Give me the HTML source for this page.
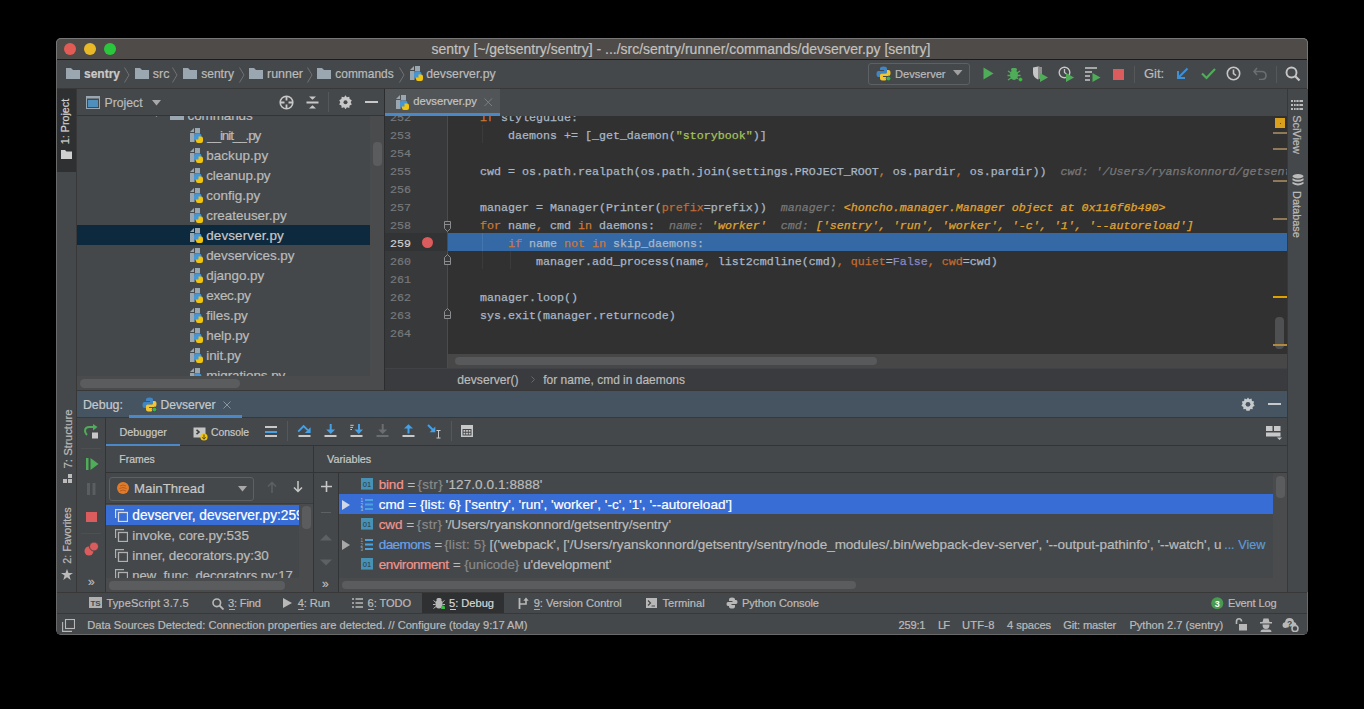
<!DOCTYPE html>
<html><head><meta charset="utf-8"><title>PyCharm</title>
<style>
html,body{margin:0;padding:0;background:#000;width:1364px;height:709px;overflow:hidden;}
body{position:relative;font-family:"Liberation Sans",sans-serif;}
.r{position:absolute;box-sizing:border-box;}
.t{position:absolute;white-space:pre;-webkit-text-stroke:0.2px currentColor;}
</style></head><body>
<div class="r" style="left:56px;top:38px;width:1252px;height:597px;background:#45484a;border-radius:5px;border:1px solid #6a6a6a;"></div>
<div class="r" style="left:56px;top:38px;width:1252px;height:22px;background:#4e4b49;border-radius:5px 5px 0 0;border:1px solid #777;border-bottom:none;"></div>
<div class="r" style="left:57px;top:59px;width:1250px;height:1px;background:#1c1c1c;"></div>
<div class="r" style="left:64px;top:43px;width:12px;height:12px;background:#e25c55;border-radius:50%;"></div>
<div class="r" style="left:84px;top:43px;width:12px;height:12px;background:#e9b827;border-radius:50%;"></div>
<div class="r" style="left:104px;top:43px;width:12px;height:12px;background:#2ac73c;border-radius:50%;"></div>
<div class="t" style="left:431.50px;top:39px;font-size:13.981px;line-height:20px;color:#c3c1bf;font-family:'Liberation Sans',sans-serif;">sentry [~/getsentry/sentry] - .../src/sentry/runner/commands/devserver.py [sentry]</div>
<div class="r" style="left:57px;top:60px;width:1250px;height:28px;background:#45484a;"></div>
<div class="r" style="left:57px;top:88px;width:1250px;height:1px;background:#383838;"></div>
<svg class="r" style="left:66px;top:68px;" width="14" height="11" viewBox="0 0 14 11"><path d="M0 0H5L7 2H14V11H0Z" fill="#9aa7b0"/></svg>
<div class="t" style="left:84.00px;top:66px;font-size:11.999px;line-height:17px;color:#c9c9c9;font-family:'Liberation Sans',sans-serif;font-weight:bold;">sentry</div>
<svg class="r" style="left:124px;top:67px;" width="6" height="16" viewBox="0 0 6 16"><path d="M0.5 0.5L5 8L0.5 15.5" stroke="#6f7173" stroke-width="1" fill="none"/></svg>
<svg class="r" style="left:135px;top:68px;" width="14" height="11" viewBox="0 0 14 11"><path d="M0 0H5L7 2H14V11H0Z" fill="#9aa7b0"/></svg>
<div class="t" style="left:152.80px;top:66px;font-size:12.470px;line-height:17px;color:#bbbbbb;font-family:'Liberation Sans',sans-serif;">src</div>
<svg class="r" style="left:172px;top:67px;" width="6" height="16" viewBox="0 0 6 16"><path d="M0.5 0.5L5 8L0.5 15.5" stroke="#6f7173" stroke-width="1" fill="none"/></svg>
<svg class="r" style="left:183px;top:68px;" width="14" height="11" viewBox="0 0 14 11"><path d="M0 0H5L7 2H14V11H0Z" fill="#9aa7b0"/></svg>
<div class="t" style="left:201.20px;top:66px;font-size:12.051px;line-height:17px;color:#bbbbbb;font-family:'Liberation Sans',sans-serif;">sentry</div>
<svg class="r" style="left:239px;top:67px;" width="6" height="16" viewBox="0 0 6 16"><path d="M0.5 0.5L5 8L0.5 15.5" stroke="#6f7173" stroke-width="1" fill="none"/></svg>
<svg class="r" style="left:249px;top:68px;" width="14" height="11" viewBox="0 0 14 11"><path d="M0 0H5L7 2H14V11H0Z" fill="#9aa7b0"/></svg>
<div class="t" style="left:267.00px;top:66px;font-size:12.454px;line-height:17px;color:#bbbbbb;font-family:'Liberation Sans',sans-serif;">runner</div>
<svg class="r" style="left:307px;top:67px;" width="6" height="16" viewBox="0 0 6 16"><path d="M0.5 0.5L5 8L0.5 15.5" stroke="#6f7173" stroke-width="1" fill="none"/></svg>
<svg class="r" style="left:317px;top:68px;" width="14" height="11" viewBox="0 0 14 11"><path d="M0 0H5L7 2H14V11H0Z" fill="#9aa7b0"/></svg>
<div class="t" style="left:335.30px;top:66px;font-size:11.941px;line-height:17px;color:#bbbbbb;font-family:'Liberation Sans',sans-serif;">commands</div>
<svg class="r" style="left:399px;top:67px;" width="6" height="16" viewBox="0 0 6 16"><path d="M0.5 0.5L5 8L0.5 15.5" stroke="#6f7173" stroke-width="1" fill="none"/></svg>
<svg class="r" style="left:410px;top:66px;" width="14" height="15" viewBox="0 0 14 15"><path d="M0 4L4 0V4Z" fill="#9aa7b0"/><path d="M5 0H10V5.5H5Z" fill="#9aa7b0"/><path d="M0 5H4.5V14H0Z" fill="#9aa7b0"/><rect x="4" y="5.8" width="7.5" height="7" rx="2.3" fill="#4596d6"/><path d="M8.5 8.5H11Q13 8.5 13 10.5V13Q13 15 11 15H8Q6 15 6 13V11.5H8.5Z" fill="#f1c40f"/></svg>
<div class="t" style="left:426.20px;top:66px;font-size:12.264px;line-height:17px;color:#bbbbbb;font-family:'Liberation Sans',sans-serif;">devserver.py</div>
<div class="r" style="left:868px;top:63px;width:102px;height:22px;border:1px solid #5e6164;border-radius:3px;background:#45484a;"></div>
<svg class="r" style="left:876px;top:66px;" width="15" height="15" viewBox="0 0 15 15"><path d="M7.5 0.5Q4 0.5 4 2.5V4H8V5H2.5Q0.5 5 0.5 8Q0.5 11 2.5 11H4V9Q4 7.5 5.5 7.5H9.5Q11 7.5 11 6V2.5Q11 0.5 7.5 0.5Z" fill="#3f86c6"/><path d="M7.5 14.5Q11 14.5 11 12.5V11H7V10H12.5Q14.5 10 14.5 7Q14.5 4 12.5 4H11V6Q11 7.5 9.5 7.5H5.5Q4 7.5 4 9V12.5Q4 14.5 7.5 14.5Z" fill="#f2c631"/><circle cx="12.5" cy="12.5" r="2.3" fill="#38b44a" stroke="#45484a" stroke-width="0.8"/></svg>
<div class="t" style="left:895.00px;top:66px;font-size:11.105px;line-height:16px;color:#bbbbbb;font-family:'Liberation Sans',sans-serif;">Devserver</div>
<svg class="r" style="left:953px;top:70px;" width="10" height="6" viewBox="0 0 10 6"><path d="M0 0H9.5L4.75 5.5Z" fill="#a0a0a0"/></svg>
<svg class="r" style="left:983px;top:67px;" width="11" height="13" viewBox="0 0 11 13"><path d="M0.5 0.5L10.5 6.5L0.5 12.5Z" fill="#4fad59"/></svg>
<svg class="r" style="left:1007px;top:66px;" width="16" height="16" viewBox="0 0 16 16"><g fill="#4fad59"><ellipse cx="7" cy="9" rx="4" ry="5"/><rect x="4" y="2" width="6" height="3" rx="1.5"/><path d="M1 5L4 7M13 5L10 7M0.5 9.5H3M13.5 9.5H11M1 14L4 12M13 14L10 12" stroke="#4fad59" stroke-width="1.3"/></g><circle cx="13.5" cy="13.5" r="2.2" fill="#38c040" stroke="#45484a" stroke-width="0.8"/></svg>
<svg class="r" style="left:1032px;top:66px;" width="17" height="16" viewBox="0 0 17 16"><path d="M1 1.5L6 0.5L10 1.5V7Q10 11 6 13.5Q1 11 1 7Z" fill="#c6c6c6"/><path d="M6 0.5L10 1.5V7Q10 11 6 13.5Z" fill="#8d8d8d"/><path d="M8 7L16 11.5L8 16Z" fill="#4fad59"/></svg>
<svg class="r" style="left:1058px;top:66px;" width="17" height="16" viewBox="0 0 17 16"><circle cx="6.5" cy="6.5" r="5.3" fill="none" stroke="#c6c6c6" stroke-width="1.4"/><path d="M6.5 3V6.5L8.5 8" stroke="#c6c6c6" stroke-width="1.3" fill="none"/><path d="M8 7L16 11.5L8 16Z" fill="#4fad59"/></svg>
<svg class="r" style="left:1085px;top:66px;" width="16" height="16" viewBox="0 0 16 16"><path d="M0 2H12M0 6H7M0 10H5M0 14H5" stroke="#c6c6c6" stroke-width="1.5"/><path d="M7.5 7L15.5 11.5L7.5 16Z" fill="#4fad59"/></svg>
<div class="r" style="left:1113px;top:69px;width:10.5px;height:10.5px;background:#db5c5c;"></div>
<div class="r" style="left:1134px;top:66px;width:1px;height:17px;background:#555759;"></div>
<div class="t" style="left:1144.00px;top:65px;font-size:13.003px;line-height:18px;color:#bbbbbb;font-family:'Liberation Sans',sans-serif;">Git:</div>
<svg class="r" style="left:1176px;top:67px;" width="13" height="13" viewBox="0 0 13 13"><path d="M11.5 1.5L2.5 10.5M2 4V11H9" stroke="#3d8fd6" stroke-width="2" fill="none"/></svg>
<svg class="r" style="left:1201px;top:67px;" width="15" height="13" viewBox="0 0 15 13"><path d="M1 6.5L5.5 11L14 2" stroke="#4fad59" stroke-width="2.2" fill="none"/></svg>
<svg class="r" style="left:1226px;top:66px;" width="15" height="15" viewBox="0 0 15 15"><circle cx="7.5" cy="7.5" r="6.2" fill="none" stroke="#c6c6c6" stroke-width="1.6"/><path d="M7.5 3.5V7.5L10 9.5" stroke="#c6c6c6" stroke-width="1.6" fill="none"/></svg>
<svg class="r" style="left:1253px;top:67px;" width="14" height="13" viewBox="0 0 14 13"><path d="M4 1L1 4.5L4 8M1.5 4.5H8.5Q13 4.5 13 8.5Q13 12.5 8.5 12.5H6" stroke="#6b6d6f" stroke-width="1.6" fill="none"/></svg>
<div class="r" style="left:1276px;top:66px;width:1px;height:17px;background:#555759;"></div>
<svg class="r" style="left:1285px;top:66px;" width="16" height="16" viewBox="0 0 16 16"><circle cx="6.5" cy="6.5" r="5" fill="none" stroke="#c6c6c6" stroke-width="1.9"/><path d="M10 10L14.5 14.5" stroke="#c6c6c6" stroke-width="2.3"/></svg>
<div class="r" style="left:57px;top:89px;width:20px;height:503px;background:#45484a;"></div>
<div class="r" style="left:76px;top:89px;width:1px;height:503px;background:#383838;"></div>
<div class="r" style="left:57px;top:89px;width:19px;height:83px;background:#2e3032;"></div>
<div class="t" style="left:41.30px;top:113.60px;width:49.40px;height:15px;font-size:10.748px;line-height:15px;color:#d0d0d0;font-family:'Liberation Sans',sans-serif;text-align:center;transform:rotate(-90deg);">1: Project</div>
<svg class="r" style="left:61px;top:150px;" width="11" height="9" viewBox="0 0 11 9"><path d="M0 0H4L5.5 1.5H11V9H0Z" fill="#d0d0d0"/></svg>
<div class="t" style="left:35.90px;top:430.90px;width:63.20px;height:16px;font-size:11.453px;line-height:16px;color:#bbbbbb;font-family:'Liberation Sans',sans-serif;text-align:center;transform:rotate(-90deg);">7: Structure</div>
<svg class="r" style="left:63px;top:474px;" width="9" height="9" viewBox="0 0 9 9"><path d="M0 5H4V9H0ZM5 5H9V9H5ZM5 0H9V4H5Z" fill="#bbbbbb"/></svg>
<div class="t" style="left:37.35px;top:527.65px;width:60.30px;height:15px;font-size:10.777px;line-height:15px;color:#bbbbbb;font-family:'Liberation Sans',sans-serif;text-align:center;transform:rotate(-90deg);">2: Favorites</div>
<svg class="r" style="left:61px;top:569px;" width="12" height="11" viewBox="0 0 12 11"><path d="M6 0L7.5 4H12L8.4 6.6L9.7 11L6 8.3L2.3 11L3.6 6.6L0 4H4.5Z" fill="#bbbbbb"/></svg>
<div class="r" style="left:77px;top:89px;width:307px;height:26px;background:#45484a;"></div>
<div class="r" style="left:77px;top:115px;width:307px;height:1px;background:#323436;"></div>
<div class="r" style="left:77px;top:116px;width:293px;height:260px;background:#45484a;"></div>
<div class="r" style="left:370px;top:116px;width:14px;height:274px;background:#4a4b4d;"></div>
<div class="r" style="left:77px;top:376px;width:293px;height:14px;background:#4a4b4d;"></div>
<div class="r" style="left:384px;top:89px;width:1px;height:302px;background:#2b2d2f;"></div>
<svg class="r" style="left:86px;top:96px;" width="14" height="13" viewBox="0 0 14 13"><rect x="0.5" y="0.5" width="13" height="12" fill="#45484a" stroke="#9aa7b0"/><rect x="0.5" y="0.5" width="13" height="2" fill="#9aa7b0"/><rect x="2" y="4" width="10" height="7" fill="#4e8fbd"/></svg>
<div class="t" style="left:104.60px;top:95px;font-size:12.214px;line-height:17px;color:#bbbbbb;font-family:'Liberation Sans',sans-serif;">Project</div>
<svg class="r" style="left:151.5px;top:100px;" width="10" height="6" viewBox="0 0 10 6"><path d="M0 0H9L4.5 5.5Z" fill="#a8a8a8"/></svg>
<svg class="r" style="left:278.5px;top:94.5px;" width="15" height="15" viewBox="0 0 15 15"><circle cx="7.5" cy="7.5" r="6.3" fill="none" stroke="#c8c8c8" stroke-width="1.6"/><path d="M7.5 1.5V5.5M7.5 9.5V13.5M1.5 7.5H5.5M9.5 7.5H13.5" stroke="#c8c8c8" stroke-width="1.8"/></svg>
<svg class="r" style="left:305.5px;top:95.5px;" width="13" height="13" viewBox="0 0 13 13"><rect x="0.5" y="5.5" width="12" height="2" fill="#c8c8c8"/><path d="M3 0.5H10L6.5 3.8Z" fill="#c8c8c8"/><path d="M3 12.5H10L6.5 9.2Z" fill="#c8c8c8"/></svg>
<div class="r" style="left:328px;top:92px;width:1px;height:20px;background:#55585a;"></div>
<svg class="r" style="left:338.5px;top:95px;" width="13" height="14" viewBox="0 0 13 14"><path d="M6.5 0.3L7.9 2.3L10.3 1.7L10.6 4.1L12.8 5.2L11.7 7.3L12.8 9.4L10.6 10.5L10.3 12.9L7.9 12.3L6.5 14.3L5.1 12.3L2.7 12.9L2.4 10.5L0.2 9.4L1.3 7.3L0.2 5.2L2.4 4.1L2.7 1.7L5.1 2.3Z" fill="#c8c8c8"/><circle cx="6.5" cy="7.3" r="2" fill="#45484a"/></svg>
<div class="r" style="left:364.5px;top:101px;width:13px;height:2px;background:#c8c8c8;"></div>
<div class="r" style="left:77px;top:116px;width:293px;height:260px;overflow:hidden;">
<svg class="r" style="left:76px;top:-3px;" width="7" height="4" viewBox="0 0 7 4"><path d="M0 0H7L3.5 4Z" fill="#a0a0a0"/></svg>
<svg class="r" style="left:93px;top:-7px;" width="14" height="11" viewBox="0 0 14 11"><path d="M0 0H5L7 2H14V11H0Z" fill="#9aa7b0"/></svg>
<div class="t" style="left:110.60px;top:-10px;font-size:13.450px;line-height:19px;color:#bbbbbb;font-family:'Liberation Sans',sans-serif;letter-spacing:-0.086px;">commands</div>
<div class="r" style="left:0px;top:109px;width:293px;height:20px;background:#0d293e;"></div>
<svg class="r" style="left:113px;top:12px;" width="14" height="15" viewBox="0 0 14 15"><path d="M0 4L4 0V4Z" fill="#9aa7b0"/><path d="M5 0H10V5.5H5Z" fill="#9aa7b0"/><path d="M0 5H4.5V14H0Z" fill="#9aa7b0"/><rect x="4" y="5.8" width="7.5" height="7" rx="2.3" fill="#4596d6"/><path d="M8.5 8.5H11Q13 8.5 13 10.5V13Q13 15 11 15H8Q6 15 6 13V11.5H8.5Z" fill="#f1c40f"/></svg>
<div class="t" style="left:130.20px;top:10px;font-size:13.450px;line-height:19px;color:#bbbbbb;font-family:'Liberation Sans',sans-serif;letter-spacing:-1.090px;">__init__.py</div>
<svg class="r" style="left:113px;top:32px;" width="14" height="15" viewBox="0 0 14 15"><path d="M0 4L4 0V4Z" fill="#9aa7b0"/><path d="M5 0H10V5.5H5Z" fill="#9aa7b0"/><path d="M0 5H4.5V14H0Z" fill="#9aa7b0"/><rect x="4" y="5.8" width="7.5" height="7" rx="2.3" fill="#4596d6"/><path d="M8.5 8.5H11Q13 8.5 13 10.5V13Q13 15 11 15H8Q6 15 6 13V11.5H8.5Z" fill="#f1c40f"/></svg>
<div class="t" style="left:129.20px;top:30px;font-size:13.450px;line-height:19px;color:#bbbbbb;font-family:'Liberation Sans',sans-serif;letter-spacing:0.087px;">backup.py</div>
<svg class="r" style="left:113px;top:52px;" width="14" height="15" viewBox="0 0 14 15"><path d="M0 4L4 0V4Z" fill="#9aa7b0"/><path d="M5 0H10V5.5H5Z" fill="#9aa7b0"/><path d="M0 5H4.5V14H0Z" fill="#9aa7b0"/><rect x="4" y="5.8" width="7.5" height="7" rx="2.3" fill="#4596d6"/><path d="M8.5 8.5H11Q13 8.5 13 10.5V13Q13 15 11 15H8Q6 15 6 13V11.5H8.5Z" fill="#f1c40f"/></svg>
<div class="t" style="left:129.20px;top:50px;font-size:13.450px;line-height:19px;color:#bbbbbb;font-family:'Liberation Sans',sans-serif;letter-spacing:-0.067px;">cleanup.py</div>
<svg class="r" style="left:113px;top:72px;" width="14" height="15" viewBox="0 0 14 15"><path d="M0 4L4 0V4Z" fill="#9aa7b0"/><path d="M5 0H10V5.5H5Z" fill="#9aa7b0"/><path d="M0 5H4.5V14H0Z" fill="#9aa7b0"/><rect x="4" y="5.8" width="7.5" height="7" rx="2.3" fill="#4596d6"/><path d="M8.5 8.5H11Q13 8.5 13 10.5V13Q13 15 11 15H8Q6 15 6 13V11.5H8.5Z" fill="#f1c40f"/></svg>
<div class="t" style="left:129.20px;top:70px;font-size:13.450px;line-height:19px;color:#bbbbbb;font-family:'Liberation Sans',sans-serif;letter-spacing:0.025px;">config.py</div>
<svg class="r" style="left:113px;top:92px;" width="14" height="15" viewBox="0 0 14 15"><path d="M0 4L4 0V4Z" fill="#9aa7b0"/><path d="M5 0H10V5.5H5Z" fill="#9aa7b0"/><path d="M0 5H4.5V14H0Z" fill="#9aa7b0"/><rect x="4" y="5.8" width="7.5" height="7" rx="2.3" fill="#4596d6"/><path d="M8.5 8.5H11Q13 8.5 13 10.5V13Q13 15 11 15H8Q6 15 6 13V11.5H8.5Z" fill="#f1c40f"/></svg>
<div class="t" style="left:129.20px;top:90px;font-size:13.450px;line-height:19px;color:#bbbbbb;font-family:'Liberation Sans',sans-serif;letter-spacing:-0.017px;">createuser.py</div>
<svg class="r" style="left:113px;top:112px;" width="14" height="15" viewBox="0 0 14 15"><path d="M0 4L4 0V4Z" fill="#9aa7b0"/><path d="M5 0H10V5.5H5Z" fill="#9aa7b0"/><path d="M0 5H4.5V14H0Z" fill="#9aa7b0"/><rect x="4" y="5.8" width="7.5" height="7" rx="2.3" fill="#4596d6"/><path d="M8.5 8.5H11Q13 8.5 13 10.5V13Q13 15 11 15H8Q6 15 6 13V11.5H8.5Z" fill="#f1c40f"/></svg>
<div class="t" style="left:129.20px;top:110px;font-size:13.450px;line-height:19px;color:#c8c8c8;font-family:'Liberation Sans',sans-serif;letter-spacing:0.127px;">devserver.py</div>
<svg class="r" style="left:113px;top:132px;" width="14" height="15" viewBox="0 0 14 15"><path d="M0 4L4 0V4Z" fill="#9aa7b0"/><path d="M5 0H10V5.5H5Z" fill="#9aa7b0"/><path d="M0 5H4.5V14H0Z" fill="#9aa7b0"/><rect x="4" y="5.8" width="7.5" height="7" rx="2.3" fill="#4596d6"/><path d="M8.5 8.5H11Q13 8.5 13 10.5V13Q13 15 11 15H8Q6 15 6 13V11.5H8.5Z" fill="#f1c40f"/></svg>
<div class="t" style="left:129.20px;top:130px;font-size:13.450px;line-height:19px;color:#bbbbbb;font-family:'Liberation Sans',sans-serif;letter-spacing:-0.046px;">devservices.py</div>
<svg class="r" style="left:113px;top:152px;" width="14" height="15" viewBox="0 0 14 15"><path d="M0 4L4 0V4Z" fill="#9aa7b0"/><path d="M5 0H10V5.5H5Z" fill="#9aa7b0"/><path d="M0 5H4.5V14H0Z" fill="#9aa7b0"/><rect x="4" y="5.8" width="7.5" height="7" rx="2.3" fill="#4596d6"/><path d="M8.5 8.5H11Q13 8.5 13 10.5V13Q13 15 11 15H8Q6 15 6 13V11.5H8.5Z" fill="#f1c40f"/></svg>
<div class="t" style="left:129.20px;top:150px;font-size:13.450px;line-height:19px;color:#bbbbbb;font-family:'Liberation Sans',sans-serif;letter-spacing:-0.025px;">django.py</div>
<svg class="r" style="left:113px;top:172px;" width="14" height="15" viewBox="0 0 14 15"><path d="M0 4L4 0V4Z" fill="#9aa7b0"/><path d="M5 0H10V5.5H5Z" fill="#9aa7b0"/><path d="M0 5H4.5V14H0Z" fill="#9aa7b0"/><rect x="4" y="5.8" width="7.5" height="7" rx="2.3" fill="#4596d6"/><path d="M8.5 8.5H11Q13 8.5 13 10.5V13Q13 15 11 15H8Q6 15 6 13V11.5H8.5Z" fill="#f1c40f"/></svg>
<div class="t" style="left:129.20px;top:170px;font-size:13.450px;line-height:19px;color:#bbbbbb;font-family:'Liberation Sans',sans-serif;letter-spacing:-0.250px;">exec.py</div>
<svg class="r" style="left:113px;top:192px;" width="14" height="15" viewBox="0 0 14 15"><path d="M0 4L4 0V4Z" fill="#9aa7b0"/><path d="M5 0H10V5.5H5Z" fill="#9aa7b0"/><path d="M0 5H4.5V14H0Z" fill="#9aa7b0"/><rect x="4" y="5.8" width="7.5" height="7" rx="2.3" fill="#4596d6"/><path d="M8.5 8.5H11Q13 8.5 13 10.5V13Q13 15 11 15H8Q6 15 6 13V11.5H8.5Z" fill="#f1c40f"/></svg>
<div class="t" style="left:129.20px;top:190px;font-size:13.450px;line-height:19px;color:#bbbbbb;font-family:'Liberation Sans',sans-serif;letter-spacing:-0.029px;">files.py</div>
<svg class="r" style="left:113px;top:212px;" width="14" height="15" viewBox="0 0 14 15"><path d="M0 4L4 0V4Z" fill="#9aa7b0"/><path d="M5 0H10V5.5H5Z" fill="#9aa7b0"/><path d="M0 5H4.5V14H0Z" fill="#9aa7b0"/><rect x="4" y="5.8" width="7.5" height="7" rx="2.3" fill="#4596d6"/><path d="M8.5 8.5H11Q13 8.5 13 10.5V13Q13 15 11 15H8Q6 15 6 13V11.5H8.5Z" fill="#f1c40f"/></svg>
<div class="t" style="left:129.20px;top:210px;font-size:13.450px;line-height:19px;color:#bbbbbb;font-family:'Liberation Sans',sans-serif;letter-spacing:-0.033px;">help.py</div>
<svg class="r" style="left:113px;top:232px;" width="14" height="15" viewBox="0 0 14 15"><path d="M0 4L4 0V4Z" fill="#9aa7b0"/><path d="M5 0H10V5.5H5Z" fill="#9aa7b0"/><path d="M0 5H4.5V14H0Z" fill="#9aa7b0"/><rect x="4" y="5.8" width="7.5" height="7" rx="2.3" fill="#4596d6"/><path d="M8.5 8.5H11Q13 8.5 13 10.5V13Q13 15 11 15H8Q6 15 6 13V11.5H8.5Z" fill="#f1c40f"/></svg>
<div class="t" style="left:129.20px;top:230px;font-size:13.450px;line-height:19px;color:#bbbbbb;font-family:'Liberation Sans',sans-serif;letter-spacing:-0.033px;">init.py</div>
<svg class="r" style="left:113px;top:252px;" width="14" height="15" viewBox="0 0 14 15"><path d="M0 4L4 0V4Z" fill="#9aa7b0"/><path d="M5 0H10V5.5H5Z" fill="#9aa7b0"/><path d="M0 5H4.5V14H0Z" fill="#9aa7b0"/><rect x="4" y="5.8" width="7.5" height="7" rx="2.3" fill="#4596d6"/><path d="M8.5 8.5H11Q13 8.5 13 10.5V13Q13 15 11 15H8Q6 15 6 13V11.5H8.5Z" fill="#f1c40f"/></svg>
<div class="t" style="left:129.20px;top:250px;font-size:13.450px;line-height:19px;color:#bbbbbb;font-family:'Liberation Sans',sans-serif;letter-spacing:-0.067px;">migrations.py</div>
</div>
<div class="r" style="left:373px;top:142px;width:8.5px;height:23.5px;background:#5a5c5e;border-radius:4px;"></div>
<div class="r" style="left:79.5px;top:378.5px;width:160px;height:9px;background:#5a5c5e;border-radius:4.5px;"></div>
<div class="r" style="left:1287px;top:89px;width:21px;height:503px;background:#45484a;"></div>
<div class="r" style="left:1287px;top:89px;width:1px;height:503px;background:#383838;"></div>
<svg class="r" style="left:1291px;top:100px;" width="12" height="10" viewBox="0 0 12 10"><path d="M0 0H2V2H0ZM0 4H2V6H0ZM0 8H2V10H0ZM3 0H12V2H3ZM3 4H12V6H3ZM3 8H12V10H3Z" fill="#bbbbbb"/><path d="M5 0V10M8 0V10" stroke="#45484a" stroke-width="0.8"/></svg>
<div class="t" style="left:1274.55px;top:127.35px;width:42.90px;height:15px;font-size:10.937px;line-height:15px;color:#bbbbbb;font-family:'Liberation Sans',sans-serif;text-align:center;transform:rotate(90deg);">SciView</div>
<svg class="r" style="left:1291.5px;top:174px;" width="12" height="12" viewBox="0 0 12 12"><ellipse cx="6" cy="2.2" rx="5.5" ry="2.2" fill="#bbbbbb"/><path d="M0.5 4.2Q6 7.5 11.5 4.2V6.2Q6 9.5 0.5 6.2ZM0.5 7.8Q6 11 11.5 7.8V9.8Q6 13 0.5 9.8Z" fill="#bbbbbb"/></svg>
<div class="t" style="left:1270.60px;top:206.70px;width:50.80px;height:15px;font-size:10.933px;line-height:15px;color:#bbbbbb;font-family:'Liberation Sans',sans-serif;text-align:center;transform:rotate(90deg);">Database</div>
<div class="r" style="left:385px;top:89px;width:902px;height:27px;background:#45484a;"></div>
<div class="r" style="left:385px;top:89px;width:115px;height:24px;background:#515558;"></div>
<div class="r" style="left:385px;top:113px;width:115px;height:3px;background:#4a88c7;"></div>
<svg class="r" style="left:396px;top:94.5px;" width="14" height="15" viewBox="0 0 14 15"><path d="M0 4L4 0V4Z" fill="#9aa7b0"/><path d="M5 0H10V5.5H5Z" fill="#9aa7b0"/><path d="M0 5H4.5V14H0Z" fill="#9aa7b0"/><rect x="4" y="5.8" width="7.5" height="7" rx="2.3" fill="#4596d6"/><path d="M8.5 8.5H11Q13 8.5 13 10.5V13Q13 15 11 15H8Q6 15 6 13V11.5H8.5Z" fill="#f1c40f"/></svg>
<div class="t" style="left:413.20px;top:93px;font-size:11.252px;line-height:16px;color:#c4c4c4;font-family:'Liberation Sans',sans-serif;">devserver.py</div>
<svg class="r" style="left:484px;top:98px;" width="8.5" height="8.5" viewBox="0 0 8.5 8.5"><path d="M0.5 0.5L8 8M8 0.5L0.5 8" stroke="#7d7f81" stroke-width="1"/></svg>
<div class="r" style="left:385px;top:116px;width:62px;height:252px;background:#37393b;"></div>
<div class="r" style="left:447px;top:116px;width:840px;height:252px;background:#313131;"></div>
<div class="r" style="left:447px;top:116px;width:1px;height:252px;background:#4a4c4e;"></div>
<div class="r" style="left:385px;top:233px;width:62px;height:18px;background:#313335;"></div>
<div class="r" style="left:448px;top:233px;width:839px;height:18px;background:#3569a6;"></div>
<div class="r" style="left:482px;top:125px;width:1px;height:18px;background:#3b3b3b;"></div>
<div class="r" style="left:482px;top:251px;width:1px;height:18px;background:#3b3b3b;"></div>
<div class="r" style="left:482px;top:233px;width:1px;height:18px;background:#4575ae;"></div>
<div class="r" style="left:510px;top:251px;width:1px;height:18px;background:#3b3b3b;"></div>
<div class="r" style="left:421.5px;top:236.5px;width:11px;height:11px;background:#db5c5c;border-radius:50%;"></div>
<svg class="r" style="left:444px;top:221px;" width="8" height="11" viewBox="0 0 8 11"><path d="M0.5 0.5H6.5V7.5L3.5 10.5L0.5 7.5Z" fill="#37393b" stroke="#8a8c8e" stroke-width="1"/><path d="M1 3.5H6" stroke="#8a8c8e"/></svg>
<svg class="r" style="left:444px;top:254px;" width="8" height="11" viewBox="0 0 8 11"><path d="M0.5 10.5H6.5V3.5L3.5 0.5L0.5 3.5Z" fill="#37393b" stroke="#8a8c8e" stroke-width="1"/><path d="M1 7.5H6" stroke="#8a8c8e"/></svg>
<svg class="r" style="left:444px;top:308px;" width="8" height="11" viewBox="0 0 8 11"><path d="M0.5 10.5H6.5V3.5L3.5 0.5L0.5 3.5Z" fill="#37393b" stroke="#8a8c8e" stroke-width="1"/><path d="M1 7.5H6" stroke="#8a8c8e"/></svg>
<div class="r" style="left:385px;top:116px;width:902px;height:252px;overflow:hidden;">
<div class="t" style="left:5.00px;top:-6px;font-size:11.667px;line-height:16px;color:#77797b;font-family:'Liberation Mono',monospace;">252</div>
<div class="t" style="left:5.00px;top:12px;font-size:11.667px;line-height:16px;color:#77797b;font-family:'Liberation Mono',monospace;">253</div>
<div class="t" style="left:5.00px;top:30px;font-size:11.667px;line-height:16px;color:#77797b;font-family:'Liberation Mono',monospace;">254</div>
<div class="t" style="left:5.00px;top:48px;font-size:11.667px;line-height:16px;color:#77797b;font-family:'Liberation Mono',monospace;">255</div>
<div class="t" style="left:5.00px;top:66px;font-size:11.667px;line-height:16px;color:#77797b;font-family:'Liberation Mono',monospace;">256</div>
<div class="t" style="left:5.00px;top:84px;font-size:11.667px;line-height:16px;color:#77797b;font-family:'Liberation Mono',monospace;">257</div>
<div class="t" style="left:5.00px;top:102px;font-size:11.667px;line-height:16px;color:#77797b;font-family:'Liberation Mono',monospace;">258</div>
<div class="t" style="left:5.00px;top:120px;font-size:11.667px;line-height:16px;color:#d0d0d0;font-family:'Liberation Mono',monospace;">259</div>
<div class="t" style="left:5.00px;top:138px;font-size:11.667px;line-height:16px;color:#77797b;font-family:'Liberation Mono',monospace;">260</div>
<div class="t" style="left:5.00px;top:156px;font-size:11.667px;line-height:16px;color:#77797b;font-family:'Liberation Mono',monospace;">261</div>
<div class="t" style="left:5.00px;top:174px;font-size:11.667px;line-height:16px;color:#77797b;font-family:'Liberation Mono',monospace;">262</div>
<div class="t" style="left:5.00px;top:192px;font-size:11.667px;line-height:16px;color:#77797b;font-family:'Liberation Mono',monospace;">263</div>
<div class="t" style="left:5.00px;top:210px;font-size:11.667px;line-height:16px;color:#77797b;font-family:'Liberation Mono',monospace;">264</div>
<div class="t" style="left:67.00px;top:-6px;font-size:11.667px;line-height:16px;color:#a9b7c6;font-family:'Liberation Mono',monospace;-webkit-text-stroke:0.25px currentColor;"><span style="color:#a9b7c6">    </span><span style="color:#cc7832">if</span><span style="color:#a9b7c6"> styleguide:</span></div>
<div class="t" style="left:67.00px;top:12px;font-size:11.667px;line-height:16px;color:#a9b7c6;font-family:'Liberation Mono',monospace;-webkit-text-stroke:0.25px currentColor;"><span style="color:#a9b7c6">        daemons += [_get_daemon(</span><span style="color:#a5c25c">"storybook"</span><span style="color:#a9b7c6">)]</span></div>
<div class="t" style="left:67.00px;top:48px;font-size:11.667px;line-height:16px;color:#a9b7c6;font-family:'Liberation Mono',monospace;-webkit-text-stroke:0.25px currentColor;"><span style="color:#a9b7c6">    cwd = os.path.realpath(os.path.join(settings.PROJECT_ROOT</span><span style="color:#cc7832">,</span><span style="color:#a9b7c6"> os.pardir</span><span style="color:#cc7832">,</span><span style="color:#a9b7c6"> os.pardir))</span><span style="color:#787878;font-style:italic">  cwd: </span><span style="color:#787878;font-style:italic">'/Users/ryanskonnord/getsentry/sentry'</span></div>
<div class="t" style="left:67.00px;top:84px;font-size:11.667px;line-height:16px;color:#a9b7c6;font-family:'Liberation Mono',monospace;-webkit-text-stroke:0.25px currentColor;"><span style="color:#a9b7c6">    manager = Manager(Printer(</span><span style="color:#c46b30">prefix</span><span style="color:#a9b7c6">=prefix))</span><span style="color:#787878;font-style:italic">  manager: </span><span style="color:#e0a52f;font-style:italic">&lt;honcho.manager.Manager object at 0x116f6b490&gt;</span></div>
<div class="t" style="left:67.00px;top:102px;font-size:11.667px;line-height:16px;color:#a9b7c6;font-family:'Liberation Mono',monospace;-webkit-text-stroke:0.25px currentColor;"><span style="color:#a9b7c6">    </span><span style="color:#cc7832">for</span><span style="color:#a9b7c6"> name</span><span style="color:#cc7832">,</span><span style="color:#a9b7c6"> cmd </span><span style="color:#cc7832">in</span><span style="color:#a9b7c6"> daemons:</span><span style="color:#787878;font-style:italic">  name: </span><span style="color:#e0a52f;font-style:italic">'worker'</span><span style="color:#787878;font-style:italic">  cmd: </span><span style="color:#e0a52f;font-style:italic">['sentry', 'run', 'worker', '-c', '1', '--autoreload']</span></div>
<div class="t" style="left:67.00px;top:120px;font-size:11.667px;line-height:16px;color:#a9b7c6;font-family:'Liberation Mono',monospace;-webkit-text-stroke:0.25px currentColor;"><span style="color:#a9b7c6">        </span><span style="color:#cc7832">if</span><span style="color:#a9b7c6"> name </span><span style="color:#cc7832">not</span><span style="color:#a9b7c6"> </span><span style="color:#cc7832">in</span><span style="color:#a9b7c6"> skip_daemons:</span></div>
<div class="t" style="left:67.00px;top:138px;font-size:11.667px;line-height:16px;color:#a9b7c6;font-family:'Liberation Mono',monospace;-webkit-text-stroke:0.25px currentColor;"><span style="color:#a9b7c6">            manager.add_process(name</span><span style="color:#cc7832">,</span><span style="color:#a9b7c6"> list2cmdline(cmd)</span><span style="color:#cc7832">,</span><span style="color:#a9b7c6"> </span><span style="color:#c46b30">quiet</span><span style="color:#a9b7c6">=</span><span style="color:#8888c6">False</span><span style="color:#cc7832">,</span><span style="color:#a9b7c6"> </span><span style="color:#c46b30">cwd</span><span style="color:#a9b7c6">=cwd)</span></div>
<div class="t" style="left:67.00px;top:174px;font-size:11.667px;line-height:16px;color:#a9b7c6;font-family:'Liberation Mono',monospace;-webkit-text-stroke:0.25px currentColor;"><span style="color:#a9b7c6">    manager.loop()</span></div>
<div class="t" style="left:67.00px;top:192px;font-size:11.667px;line-height:16px;color:#a9b7c6;font-family:'Liberation Mono',monospace;-webkit-text-stroke:0.25px currentColor;"><span style="color:#a9b7c6">    sys.exit(manager.returncode)</span></div>
</div>
<div class="r" style="left:448px;top:354px;width:839px;height:14px;background:#474747;"></div>
<div class="r" style="left:454.5px;top:356.5px;width:422px;height:8.5px;background:#58595b;border-radius:4px;"></div>
<div class="r" style="left:1275px;top:317px;width:9px;height:32px;background:#4f5052;border-radius:4px;"></div>
<div class="r" style="left:1275px;top:118px;width:10px;height:10px;background:#d9a01e;"></div>
<div class="r" style="left:1279.5px;top:122.5px;width:1px;height:1px;background:#6b5000;"></div>
<div class="r" style="left:1273px;top:132px;width:14px;height:2px;background:#8e7a57;"></div>
<div class="r" style="left:1273px;top:148px;width:14px;height:2px;background:#8e7a57;"></div>
<div class="r" style="left:1273px;top:180px;width:14px;height:2px;background:#8e7a57;"></div>
<div class="r" style="left:1273px;top:218px;width:14px;height:2px;background:#8e7a57;"></div>
<div class="r" style="left:1273px;top:296px;width:14px;height:2px;background:#e0a000;"></div>
<div class="r" style="left:1273px;top:344px;width:14px;height:2px;background:#b08a40;"></div>
<div class="r" style="left:385px;top:368px;width:902px;height:22px;background:#393b3e;"></div>
<div class="r" style="left:385px;top:368px;width:902px;height:1px;background:#404246;"></div>
<div class="t" style="left:457.30px;top:372px;font-size:12.143px;line-height:17px;color:#bbbbbb;font-family:'Liberation Sans',sans-serif;">devserver()</div>
<svg class="r" style="left:530.5px;top:376px;" width="4" height="7" viewBox="0 0 4 7"><path d="M0.5 0.5L3.5 3.5L0.5 6.5" stroke="#66686a" fill="none"/></svg>
<div class="t" style="left:543.30px;top:372px;font-size:11.978px;line-height:17px;color:#bbbbbb;font-family:'Liberation Sans',sans-serif;">for name, cmd in daemons</div>
<div class="r" style="left:77px;top:390px;width:1210px;height:1px;background:#383838;"></div>
<div class="r" style="left:77px;top:391px;width:1210px;height:26px;background:#465462;"></div>
<div class="r" style="left:77px;top:417px;width:1210px;height:1px;background:#383838;"></div>
<div class="t" style="left:82.90px;top:397px;font-size:12.426px;line-height:17px;color:#c6c9cc;font-family:'Liberation Sans',sans-serif;">Debug:</div>
<svg class="r" style="left:142px;top:397px;" width="15" height="15" viewBox="0 0 15 15"><path d="M7.5 0.5Q4 0.5 4 2.5V4H8V5H2.5Q0.5 5 0.5 8Q0.5 11 2.5 11H4V9Q4 7.5 5.5 7.5H9.5Q11 7.5 11 6V2.5Q11 0.5 7.5 0.5Z" fill="#3f86c6"/><path d="M7.5 14.5Q11 14.5 11 12.5V11H7V10H12.5Q14.5 10 14.5 7Q14.5 4 12.5 4H11V6Q11 7.5 9.5 7.5H5.5Q4 7.5 4 9V12.5Q4 14.5 7.5 14.5Z" fill="#f2c631"/><circle cx="12.5" cy="12.5" r="2.3" fill="#38b44a" stroke="#45484a" stroke-width="0.8"/></svg>
<div class="t" style="left:160.60px;top:397px;font-size:12.072px;line-height:17px;color:#c6c9cc;font-family:'Liberation Sans',sans-serif;">Devserver</div>
<svg class="r" style="left:223px;top:400.5px;" width="8" height="8" viewBox="0 0 8 8"><path d="M0.5 0.5L7.5 7.5M7.5 0.5L0.5 7.5" stroke="#8a949e" stroke-width="1"/></svg>
<div class="r" style="left:129px;top:415px;width:113px;height:3px;background:#4a88c7;"></div>
<svg class="r" style="left:1241px;top:397px;" width="14" height="14" viewBox="0 0 14 14"><path d="M7 0.5L8.3 2.3L10.5 1.6L10.9 3.9L13.1 4.6L12.4 6.8L13.6 8.7L11.6 9.9L11.7 12.2L9.4 12.1L8.2 14.1L7 13.5L5.8 14.1L4.6 12.1L2.3 12.2L2.4 9.9L0.4 8.7L1.6 6.8L0.9 4.6L3.1 3.9L3.5 1.6L5.7 2.3Z" fill="#c6c9cc"/><circle cx="7" cy="7.3" r="2.4" fill="#465462"/></svg>
<div class="r" style="left:1268px;top:403px;width:12.5px;height:2px;background:#c6c9cc;"></div>
<div class="r" style="left:77px;top:418px;width:29px;height:174px;background:#45484a;"></div>
<div class="r" style="left:105px;top:418px;width:1px;height:174px;background:#323436;"></div>
<svg class="r" style="left:84px;top:424px;" width="15" height="15" viewBox="0 0 15 15"><path d="M3 11Q1 9 1 7Q1 3 5.5 3H10" stroke="#4fad59" stroke-width="2" fill="none"/><path d="M9 0L13.5 3L9 6.5Z" fill="#4fad59"/><rect x="8" y="8.5" width="6" height="6" fill="#c8c8c8"/></svg>
<div class="r" style="left:81px;top:448px;width:20px;height:1px;background:#4d4f51;"></div>
<svg class="r" style="left:86px;top:458px;" width="13" height="12" viewBox="0 0 13 12"><rect x="0" y="0" width="2.5" height="12" fill="#4fad59"/><path d="M4.5 0L12.5 6L4.5 12Z" fill="#4fad59"/></svg>
<svg class="r" style="left:87px;top:483px;" width="9" height="12" viewBox="0 0 9 12"><rect x="0" y="0" width="3" height="12" fill="#5b5d5f"/><rect x="5.5" y="0" width="3" height="12" fill="#5b5d5f"/></svg>
<div class="r" style="left:86px;top:512px;width:10.5px;height:10px;background:#db5c5c;"></div>
<div class="r" style="left:81px;top:533px;width:20px;height:1px;background:#4d4f51;"></div>
<svg class="r" style="left:84px;top:542px;" width="15" height="14" viewBox="0 0 15 14"><circle cx="5" cy="9" r="4.5" fill="#db5c5c"/><circle cx="10" cy="4.5" r="4.5" fill="#db5c5c" stroke="#45484a" stroke-width="1"/></svg>
<div class="t" style="left:88.00px;top:574px;font-size:12.000px;line-height:17px;color:#bbbbbb;font-family:'Liberation Sans',sans-serif;">»</div>
<div class="r" style="left:106px;top:418px;width:1181px;height:27px;background:#45484a;"></div>
<div class="r" style="left:106px;top:445px;width:1181px;height:1px;background:#323436;"></div>
<div class="t" style="left:119.40px;top:425px;font-size:10.839px;line-height:15px;color:#c8c8c8;font-family:'Liberation Sans',sans-serif;">Debugger</div>
<div class="r" style="left:106px;top:444px;width:74px;height:2px;background:#4a88c7;"></div>
<svg class="r" style="left:192.5px;top:426.5px;" width="15" height="14" viewBox="0 0 15 14"><rect x="0.5" y="0.5" width="12" height="10" fill="#c4c4c4"/><path d="M3.5 2.8L6 5L3.5 7.2" stroke="#3c3f41" stroke-width="1.6" fill="none"/><circle cx="11" cy="10" r="3.6" fill="#eec20e"/><path d="M11 7.5V12M9.3 10.3L11 12.2L12.7 10.3" stroke="#5a4a10" stroke-width="1" fill="none"/></svg>
<div class="t" style="left:211.00px;top:425px;font-size:10.361px;line-height:15px;color:#c8c8c8;font-family:'Liberation Sans',sans-serif;">Console</div>
<div class="r" style="left:265px;top:426px;width:12px;height:2px;background:#c8c8c8;"></div>
<div class="r" style="left:265px;top:430.5px;width:12px;height:2px;background:#4a9fe0;"></div>
<div class="r" style="left:265px;top:435px;width:12px;height:2px;background:#c8c8c8;"></div>
<div class="r" style="left:287px;top:421px;width:1px;height:20px;background:#555759;"></div>
<svg class="r" style="left:296.5px;top:424px;" width="15" height="14" viewBox="0 0 15 14"><path d="M1.2 7.6L6.6 2L11 6.4" stroke="#45a0e6" stroke-width="1.9" fill="none"/><path d="M13.6 3.2V9H7.8Z" fill="#45a0e6"/><rect x="1.5" y="11" width="12" height="2" fill="#c8c8c8"/></svg>
<svg class="r" style="left:323.5px;top:424px;" width="14" height="14" viewBox="0 0 14 14"><rect x="5.7" y="0" width="2" height="6.5" fill="#45a0e6"/><path d="M2.2 5.5H11.2L6.7 10Z" fill="#45a0e6"/><rect x="0.5" y="11" width="12" height="2" fill="#c8c8c8"/></svg>
<svg class="r" style="left:349.5px;top:424px;" width="14" height="14" viewBox="0 0 14 14"><path d="M0.3 1.3H3.7M0.3 3.4H3M0.3 5.5H2" stroke="#c8c8c8" stroke-width="1"/><rect x="8" y="0" width="2" height="6.5" fill="#45a0e6"/><path d="M4.5 5.5H13L8.8 10Z" fill="#45a0e6"/><rect x="0.5" y="11" width="12" height="2" fill="#c8c8c8"/></svg>
<svg class="r" style="left:375.5px;top:424px;" width="14" height="14" viewBox="0 0 14 14"><rect x="5.7" y="0" width="2" height="6.5" fill="#6b6d6f"/><path d="M2.2 5.5H11.2L6.7 10Z" fill="#6b6d6f"/><rect x="0.5" y="11" width="12" height="2" fill="#6b6d6f"/></svg>
<svg class="r" style="left:401.5px;top:424px;" width="14" height="14" viewBox="0 0 14 14"><path d="M2 4.5H11L6.5 0.3Z" fill="#45a0e6"/><rect x="5.5" y="4" width="2" height="5.5" fill="#45a0e6"/><rect x="0.5" y="11" width="12" height="2" fill="#c8c8c8"/></svg>
<svg class="r" style="left:427px;top:424px;" width="16" height="15" viewBox="0 0 16 15"><path d="M1 1L6.5 6.5" stroke="#45a0e6" stroke-width="1.9"/><path d="M8.3 2.6V8.3H2.6Z" fill="#45a0e6"/><path d="M11.5 6.5V14M9.5 6.5H13.5M9.5 14H13.5" stroke="#c8c8c8" stroke-width="1"/></svg>
<div class="r" style="left:450.5px;top:421px;width:1px;height:20px;background:#555759;"></div>
<svg class="r" style="left:461px;top:425px;" width="12" height="12" viewBox="0 0 12 12"><path d="M0 0H12V12H0ZM1.5 4V10.5H10.5V4Z" fill="#c8c8c8" fill-rule="evenodd"/><path d="M2.5 5H4.3V6.8H2.5ZM5.1 5H6.9V6.8H5.1ZM7.7 5H9.5V6.8H7.7ZM2.5 7.8H4.3V9.6H2.5ZM5.1 7.8H6.9V9.6H5.1ZM7.7 7.8H9.5V9.6H7.7Z" fill="#c8c8c8"/></svg>
<svg class="r" style="left:1266px;top:426px;" width="16" height="14" viewBox="0 0 16 14"><rect x="0" y="0" width="6.5" height="5" fill="#c8c8c8"/><rect x="8" y="0" width="6.5" height="5" fill="#c8c8c8"/><rect x="0" y="6.5" width="14.5" height="4" fill="#c8c8c8"/><path d="M11 11.5H16L13.5 14Z" fill="#c8c8c8"/></svg>
<div class="r" style="left:106px;top:446px;width:1181px;height:26px;background:#45484a;"></div>
<div class="r" style="left:106px;top:472px;width:1181px;height:1px;background:#323436;"></div>
<div class="r" style="left:313px;top:446px;width:1px;height:146px;background:#323436;"></div>
<div class="t" style="left:119.30px;top:452px;font-size:10.450px;line-height:15px;color:#c8c8c8;font-family:'Liberation Sans',sans-serif;">Frames</div>
<div class="t" style="left:327.00px;top:452px;font-size:10.800px;line-height:15px;color:#c8c8c8;font-family:'Liberation Sans',sans-serif;">Variables</div>
<div class="r" style="left:106px;top:473px;width:207px;height:119px;background:#45484a;"></div>
<div class="r" style="left:109px;top:476.5px;width:145px;height:24px;border:1px solid #5e6164;border-radius:3px;"></div>
<svg class="r" style="left:117px;top:482px;" width="12" height="12" viewBox="0 0 12 12"><circle cx="6" cy="6" r="6" fill="#e07b2a"/><path d="M3 4Q6 2 9 4M2.5 6.5Q6 4.5 9.5 6.5M3 9Q6 7 9 9" stroke="#b2541a" stroke-width="0.8" fill="none"/></svg>
<div class="t" style="left:134.10px;top:480px;font-size:13.198px;line-height:18px;color:#c8c8c8;font-family:'Liberation Sans',sans-serif;">MainThread</div>
<svg class="r" style="left:238px;top:486px;" width="9" height="5.5" viewBox="0 0 9 5.5"><path d="M0 0H9L4.5 5.5Z" fill="#a8a8a8"/></svg>
<svg class="r" style="left:267px;top:481px;" width="10" height="12" viewBox="0 0 10 12"><path d="M5 1.5V12M1 5.5L5 1.5L9 5.5" stroke="#5e6062" stroke-width="1.5" fill="none"/></svg>
<svg class="r" style="left:293px;top:481px;" width="10" height="12" viewBox="0 0 10 12"><path d="M5 0V10.5M1 6.5L5 10.5L9 6.5" stroke="#c8c8c8" stroke-width="1.5" fill="none"/></svg>
<div class="r" style="left:106px;top:503px;width:207px;height:1px;background:#3a3c3e;"></div>
<div class="r" style="left:106px;top:504px;width:193px;height:74px;overflow:hidden;">
<div class="r" style="left:0px;top:1px;width:193px;height:20px;background:#376dd5;"></div>
<svg class="r" style="left:9px;top:5px;" width="13" height="13" viewBox="0 0 13 13"><path d="M0.5 9V0.5H9" stroke="#d8dbe0" stroke-width="1.3" fill="none"/><rect x="3.5" y="3.5" width="9" height="9" fill="none" stroke="#d8dbe0" stroke-width="1.3"/></svg>
<div class="t" style="left:26.30px;top:2px;font-size:13.713px;line-height:19px;color:#ffffff;font-family:'Liberation Sans',sans-serif;">devserver, devserver.py:259</div>
<svg class="r" style="left:9px;top:25px;" width="13" height="13" viewBox="0 0 13 13"><path d="M0.5 9V0.5H9" stroke="#b0b0b0" stroke-width="1.3" fill="none"/><rect x="3.5" y="3.5" width="9" height="9" fill="none" stroke="#b0b0b0" stroke-width="1.3"/></svg>
<div class="t" style="left:26.30px;top:22px;font-size:13.469px;line-height:19px;color:#bbbbbb;font-family:'Liberation Sans',sans-serif;">invoke, core.py:535</div>
<svg class="r" style="left:9px;top:45px;" width="13" height="13" viewBox="0 0 13 13"><path d="M0.5 9V0.5H9" stroke="#b0b0b0" stroke-width="1.3" fill="none"/><rect x="3.5" y="3.5" width="9" height="9" fill="none" stroke="#b0b0b0" stroke-width="1.3"/></svg>
<div class="t" style="left:26.30px;top:42px;font-size:13.434px;line-height:19px;color:#bbbbbb;font-family:'Liberation Sans',sans-serif;">inner, decorators.py:30</div>
<svg class="r" style="left:9px;top:65px;" width="13" height="13" viewBox="0 0 13 13"><path d="M0.5 9V0.5H9" stroke="#b0b0b0" stroke-width="1.3" fill="none"/><rect x="3.5" y="3.5" width="9" height="9" fill="none" stroke="#b0b0b0" stroke-width="1.3"/></svg>
<div class="t" style="left:26.30px;top:63px;font-size:13.073px;line-height:18px;color:#bbbbbb;font-family:'Liberation Sans',sans-serif;">new_func, decorators.py:17</div>
</div>
<div class="r" style="left:299px;top:504px;width:14px;height:74px;background:#4a4b4d;"></div>
<div class="r" style="left:302px;top:506px;width:8.5px;height:23px;background:#5a5c5e;border-radius:4px;"></div>
<div class="r" style="left:106px;top:578px;width:207px;height:14px;background:#4a4b4d;"></div>
<div class="r" style="left:109px;top:581px;width:175.5px;height:8.5px;background:#5a5c5e;border-radius:4px;"></div>
<div class="r" style="left:314px;top:473px;width:25px;height:119px;background:#45484a;"></div>
<div class="r" style="left:338px;top:473px;width:1px;height:119px;background:#323436;"></div>
<svg class="r" style="left:321px;top:481px;" width="11" height="11" viewBox="0 0 11 11"><path d="M5.5 0V11M0 5.5H11" stroke="#c8c8c8" stroke-width="1.6"/></svg>
<div class="r" style="left:321px;top:511.5px;width:10px;height:1.5px;background:#5e6062;"></div>
<svg class="r" style="left:320px;top:534px;" width="12" height="7" viewBox="0 0 12 7"><path d="M0 6.5L6 0.5L12 6.5Z" fill="#5e6062"/></svg>
<svg class="r" style="left:320px;top:559px;" width="12" height="7" viewBox="0 0 12 7"><path d="M0 0.5L6 6.5L12 0.5Z" fill="#5e6062"/></svg>
<div class="t" style="left:322.00px;top:576px;font-size:12.000px;line-height:17px;color:#bbbbbb;font-family:'Liberation Sans',sans-serif;">»</div>
<div class="r" style="left:339px;top:473px;width:948px;height:119px;background:#45484a;"></div>
<div class="r" style="left:339px;top:473px;width:934px;height:105px;overflow:hidden;">
<div class="r" style="left:0px;top:21px;width:934px;height:20px;background:#376dd5;"></div>
<svg class="r" style="left:22px;top:5.2px;" width="12" height="11.6" viewBox="0 0 12 11.6"><rect x="0" y="0" width="12" height="11.6" fill="#4691b4"/><text x="6" y="8.8" font-family="Liberation Sans" font-size="7.5" fill="#2a3a44" text-anchor="middle">01</text></svg>
<div class="t" style="left:39.70px;top:2px;font-size:13.500px;line-height:19px;color:#f2958e;font-family:'Liberation Sans',sans-serif;letter-spacing:-0.167px;">bind</div>
<div class="t" style="left:68.50px;top:3px;font-size:13.000px;line-height:18px;color:#bbbbbb;font-family:'Liberation Sans',sans-serif;">=</div>
<div class="t" style="left:78.40px;top:2px;font-size:13.300px;line-height:19px;color:#8a8a8a;font-family:'Liberation Sans',sans-serif;letter-spacing:0.400px;">{str}</div>
<div class="t" style="left:106.80px;top:2px;font-size:13.500px;line-height:19px;color:#bbbbbb;font-family:'Liberation Sans',sans-serif;letter-spacing:0.093px;">'127.0.0.1:8888'</div>
<svg class="r" style="left:3px;top:26.5px;" width="8" height="10" viewBox="0 0 8 10"><path d="M0 0L8 5L0 10Z" fill="#d0d8e8"/></svg>
<svg class="r" style="left:20.5px;top:24.5px;" width="14" height="14" viewBox="0 0 14 14"><path d="M5 2H13M5 6.5H13M5 11H13" stroke="#4aa3df" stroke-width="2"/><text x="0.5" y="4" font-family="Liberation Sans" font-size="4.5" fill="#b8c8d8">1</text><text x="0.5" y="8.5" font-family="Liberation Sans" font-size="4.5" fill="#b8c8d8">2</text><text x="0.5" y="13" font-family="Liberation Sans" font-size="4.5" fill="#b8c8d8">3</text></svg>
<div class="t" style="left:39.70px;top:22px;font-size:13.500px;line-height:19px;color:#ffffff;font-family:'Liberation Sans',sans-serif;letter-spacing:0.055px;">cmd = {list: 6} ['sentry', 'run', 'worker', '-c', '1', '--autoreload']</div>
<svg class="r" style="left:22px;top:45.2px;" width="12" height="11.6" viewBox="0 0 12 11.6"><rect x="0" y="0" width="12" height="11.6" fill="#4691b4"/><text x="6" y="8.8" font-family="Liberation Sans" font-size="7.5" fill="#2a3a44" text-anchor="middle">01</text></svg>
<div class="t" style="left:39.70px;top:42px;font-size:13.500px;line-height:19px;color:#f2958e;font-family:'Liberation Sans',sans-serif;letter-spacing:-0.100px;">cwd</div>
<div class="t" style="left:67.50px;top:43px;font-size:13.000px;line-height:18px;color:#bbbbbb;font-family:'Liberation Sans',sans-serif;">=</div>
<div class="t" style="left:77.80px;top:42px;font-size:13.300px;line-height:19px;color:#8a8a8a;font-family:'Liberation Sans',sans-serif;letter-spacing:0.400px;">{str}</div>
<div class="t" style="left:106.20px;top:42px;font-size:13.500px;line-height:19px;color:#bbbbbb;font-family:'Liberation Sans',sans-serif;letter-spacing:-0.097px;">'/Users/ryanskonnord/getsentry/sentry'</div>
<svg class="r" style="left:3px;top:66.5px;" width="8" height="10" viewBox="0 0 8 10"><path d="M0 0L8 5L0 10Z" fill="#a8a8a8"/></svg>
<svg class="r" style="left:20.5px;top:64.5px;" width="14" height="14" viewBox="0 0 14 14"><path d="M5 2H13M5 6.5H13M5 11H13" stroke="#4aa3df" stroke-width="2"/><text x="0.5" y="4" font-family="Liberation Sans" font-size="4.5" fill="#9aa7b0">1</text><text x="0.5" y="8.5" font-family="Liberation Sans" font-size="4.5" fill="#9aa7b0">2</text><text x="0.5" y="13" font-family="Liberation Sans" font-size="4.5" fill="#9aa7b0">3</text></svg>
<div class="t" style="left:39.70px;top:62px;font-size:13.500px;line-height:19px;color:#6aa2e8;font-family:'Liberation Sans',sans-serif;letter-spacing:-0.550px;">daemons</div>
<div class="t" style="left:95.50px;top:63px;font-size:13.000px;line-height:18px;color:#bbbbbb;font-family:'Liberation Sans',sans-serif;">=</div>
<div class="t" style="left:105.20px;top:62px;font-size:13.300px;line-height:19px;color:#8a8a8a;font-family:'Liberation Sans',sans-serif;letter-spacing:0.212px;">{list: 5}</div>
<div class="t" style="left:150.40px;top:62px;font-size:13.500px;line-height:19px;color:#bbbbbb;font-family:'Liberation Sans',sans-serif;letter-spacing:-0.016px;">[('webpack', ['/Users/ryanskonnord/getsentry/sentry/node_modules/.bin/webpack-dev-server', '--output-pathinfo', '--watch', u</div>
<div class="t" style="left:885.30px;top:64px;font-size:12.000px;line-height:17px;color:#5d9ad8;font-family:'Liberation Sans',sans-serif;">...</div>
<div class="t" style="left:899.30px;top:63px;font-size:12.555px;line-height:18px;color:#5d9ad8;font-family:'Liberation Sans',sans-serif;">View</div>
<svg class="r" style="left:22px;top:85.2px;" width="12" height="11.6" viewBox="0 0 12 11.6"><rect x="0" y="0" width="12" height="11.6" fill="#4691b4"/><text x="6" y="8.8" font-family="Liberation Sans" font-size="7.5" fill="#2a3a44" text-anchor="middle">01</text></svg>
<div class="t" style="left:39.70px;top:82px;font-size:13.500px;line-height:19px;color:#f2958e;font-family:'Liberation Sans',sans-serif;letter-spacing:-0.410px;">environment</div>
<div class="t" style="left:114.00px;top:83px;font-size:13.000px;line-height:18px;color:#bbbbbb;font-family:'Liberation Sans',sans-serif;">=</div>
<div class="t" style="left:125.20px;top:82px;font-size:13.300px;line-height:19px;color:#8a8a8a;font-family:'Liberation Sans',sans-serif;letter-spacing:-0.050px;">{unicode}</div>
<div class="t" style="left:184.20px;top:82px;font-size:13.500px;line-height:19px;color:#bbbbbb;font-family:'Liberation Sans',sans-serif;letter-spacing:-0.123px;">u'development'</div>
</div>
<div class="r" style="left:1273px;top:473px;width:14px;height:105px;background:#4a4b4d;"></div>
<div class="r" style="left:1275.5px;top:476px;width:9px;height:22px;background:#5a5c5e;border-radius:4px;"></div>
<div class="r" style="left:339px;top:578px;width:948px;height:14px;background:#4a4b4d;"></div>
<div class="r" style="left:342px;top:580.5px;width:514px;height:8.5px;background:#5a5c5e;border-radius:4px;"></div>
<div class="r" style="left:57px;top:592px;width:1250px;height:1px;background:#383838;"></div>
<div class="r" style="left:57px;top:593px;width:1250px;height:20px;background:#45484a;"></div>
<div class="r" style="left:421.5px;top:593px;width:82.5px;height:20px;background:#2e3032;"></div>
<div class="r" style="left:57px;top:613px;width:1250px;height:1px;background:#383838;"></div>
<svg class="r" style="left:89px;top:597px;" width="13" height="11" viewBox="0 0 13 11"><rect x="0" y="0" width="13" height="11" fill="#b0b0b0"/><text x="6.5" y="8.8" font-family="Liberation Sans" font-size="8" font-weight="bold" fill="#45484a" text-anchor="middle">TS</text></svg>
<div class="t" style="left:106.40px;top:595px;font-size:11.100px;line-height:16px;color:#bbbbbb;font-family:'Liberation Sans',sans-serif;letter-spacing:0.133px;">TypeScript 3.7.5</div>
<svg class="r" style="left:211.5px;top:597.5px;" width="12" height="12" viewBox="0 0 12 12"><circle cx="4.8" cy="4.8" r="3.8" fill="none" stroke="#b8b8b8" stroke-width="1.6"/><path d="M7.5 7.5L11.5 11.5" stroke="#b8b8b8" stroke-width="1.8"/></svg>
<div class="t" style="left:228.00px;top:595px;font-size:11.100px;line-height:16px;color:#bbbbbb;font-family:'Liberation Sans',sans-serif;letter-spacing:-0.167px;">3: Find</div>
<div class="r" style="left:228.5px;top:609px;width:6px;height:1px;background:#aaaaaa;"></div>
<svg class="r" style="left:282.5px;top:598px;" width="9" height="10" viewBox="0 0 9 10"><path d="M0 0L9 5L0 10Z" fill="#b8b8b8"/></svg>
<div class="t" style="left:297.70px;top:595px;font-size:11.100px;line-height:16px;color:#bbbbbb;font-family:'Liberation Sans',sans-serif;letter-spacing:-0.080px;">4: Run</div>
<div class="r" style="left:298px;top:609px;width:6px;height:1px;background:#aaaaaa;"></div>
<svg class="r" style="left:352px;top:598px;" width="11" height="10" viewBox="0 0 11 10"><path d="M0 1H2M0 5H2M0 9H2M3.5 1H11M3.5 5H11M3.5 9H11" stroke="#b8b8b8" stroke-width="1.6"/></svg>
<div class="t" style="left:367.60px;top:595px;font-size:11.100px;line-height:16px;color:#bbbbbb;font-family:'Liberation Sans',sans-serif;letter-spacing:-0.067px;">6: TODO</div>
<div class="r" style="left:368px;top:609px;width:6px;height:1px;background:#aaaaaa;"></div>
<svg class="r" style="left:433px;top:596.5px;" width="12" height="12" viewBox="0 0 12 12"><g fill="#b8b8b8"><ellipse cx="6" cy="7" rx="3.5" ry="4.5"/><rect x="3.5" y="1" width="5" height="3" rx="1.5"/><path d="M0.5 3.5L3 5.5M11.5 3.5L9 5.5M0 7.5H2.5M12 7.5H9.5M0.5 11.5L3 9.5M11.5 11.5L9 9.5" stroke="#b8b8b8" stroke-width="1"/></g><circle cx="10" cy="10.5" r="2" fill="#38c040"/></svg>
<div class="t" style="left:449.00px;top:595px;font-size:11.100px;line-height:16px;color:#d8d8d8;font-family:'Liberation Sans',sans-serif;">5: Debug</div>
<div class="r" style="left:449.5px;top:609px;width:6px;height:1px;background:#cccccc;"></div>
<svg class="r" style="left:518px;top:596.5px;" width="11" height="12" viewBox="0 0 11 12"><path d="M1.5 12V1" stroke="#b8b8b8" stroke-width="1.8"/><path d="M2 7H8V3" stroke="#b8b8b8" stroke-width="1.6" fill="none"/><path d="M5.3 3.8L8 0.5L10.7 3.8Z" fill="#b8b8b8"/></svg>
<div class="t" style="left:533.70px;top:595px;font-size:11.100px;line-height:16px;color:#bbbbbb;font-family:'Liberation Sans',sans-serif;letter-spacing:-0.006px;">9: Version Control</div>
<div class="r" style="left:534px;top:609px;width:6px;height:1px;background:#aaaaaa;"></div>
<svg class="r" style="left:646px;top:597.5px;" width="11" height="10" viewBox="0 0 11 10"><rect x="0" y="0" width="11" height="10" fill="#b8b8b8"/><path d="M2 2.5L4.5 5L2 7.5M5.5 8H9" stroke="#45484a" stroke-width="1.2" fill="none"/></svg>
<div class="t" style="left:662.40px;top:595px;font-size:11.100px;line-height:16px;color:#bbbbbb;font-family:'Liberation Sans',sans-serif;letter-spacing:0.057px;">Terminal</div>
<svg class="r" style="left:725.5px;top:597px;" width="12" height="12" viewBox="0 0 12 12"><path d="M6 0.5Q3 0.5 3 2.5V4H6.5V5H2Q0.5 5 0.5 7Q0.5 9 2 9H3V7.5Q3 6.5 4.5 6.5H8Q9 6.5 9 5.5V2.5Q9 0.5 6 0.5Z" fill="#b8b8b8"/><path d="M6 11.5Q9 11.5 9 9.5V8H5.5V7H10Q11.5 7 11.5 5Q11.5 3 10 3H9V4.5Q9 5.5 7.5 5.5H4Q3 5.5 3 6.5V9.5Q3 11.5 6 11.5Z" fill="#b8b8b8"/></svg>
<div class="t" style="left:742.00px;top:595px;font-size:11.100px;line-height:16px;color:#bbbbbb;font-family:'Liberation Sans',sans-serif;letter-spacing:-0.100px;">Python Console</div>
<svg class="r" style="left:1211px;top:597px;" width="12.5" height="12.5" viewBox="0 0 12.5 12.5"><circle cx="6.25" cy="6.25" r="6" fill="#4a9b52"/><text x="6.25" y="9.6" font-family="Liberation Sans" font-size="9" font-weight="bold" fill="#ffffff" text-anchor="middle">3</text></svg>
<div class="t" style="left:1227.90px;top:595px;font-size:11.100px;line-height:16px;color:#bbbbbb;font-family:'Liberation Sans',sans-serif;letter-spacing:-0.138px;">Event Log</div>
<div class="r" style="left:57px;top:614px;width:1250px;height:20px;background:#45484a;"></div>
<svg class="r" style="left:62px;top:619px;" width="13" height="13" viewBox="0 0 13 13"><rect x="3.5" y="0.5" width="9" height="9" fill="none" stroke="#b8b8b8" stroke-width="1.1"/><path d="M0.6 3V12.4H10" stroke="#b8b8b8" stroke-width="1.1" fill="none"/></svg>
<div class="t" style="left:87.20px;top:617px;font-size:11.150px;line-height:16px;color:#bbbbbb;font-family:'Liberation Sans',sans-serif;letter-spacing:-0.007px;">Data Sources Detected: Connection properties are detected. // Configure (today 9:17 AM)</div>
<div class="t" style="left:898.50px;top:617px;font-size:11.150px;line-height:16px;color:#bbbbbb;font-family:'Liberation Sans',sans-serif;letter-spacing:-0.225px;">259:1</div>
<div class="t" style="left:938.00px;top:617px;font-size:11.150px;line-height:16px;color:#bbbbbb;font-family:'Liberation Sans',sans-serif;letter-spacing:-1.000px;">LF</div>
<div class="t" style="left:961.90px;top:617px;font-size:11.150px;line-height:16px;color:#bbbbbb;font-family:'Liberation Sans',sans-serif;letter-spacing:0.250px;">UTF-8</div>
<div class="t" style="left:1007.00px;top:617px;font-size:11.150px;line-height:16px;color:#bbbbbb;font-family:'Liberation Sans',sans-serif;letter-spacing:-0.071px;">4 spaces</div>
<div class="t" style="left:1063.20px;top:617px;font-size:11.150px;line-height:16px;color:#bbbbbb;font-family:'Liberation Sans',sans-serif;letter-spacing:-0.140px;">Git: master</div>
<div class="t" style="left:1129.40px;top:617px;font-size:11.150px;line-height:16px;color:#bbbbbb;font-family:'Liberation Sans',sans-serif;letter-spacing:-0.017px;">Python 2.7 (sentry)</div>
<svg class="r" style="left:1235px;top:618px;" width="12" height="13" viewBox="0 0 12 13"><path d="M1.5 6V3.5Q1.5 0.8 4 0.8Q6.5 0.8 6.5 3.5" stroke="#b8b8b8" stroke-width="1.6" fill="none"/><rect x="4" y="6" width="8" height="6.5" fill="#b8b8b8"/></svg>
<svg class="r" style="left:1260px;top:617.5px;" width="12" height="14" viewBox="0 0 12 14"><path d="M2.5 4L3.5 0.5H8.5L9.5 4H12V5.5H0V4Z" fill="#b8b8b8"/><path d="M2.5 6.5Q2.5 11 6 11Q9.5 11 9.5 6.5Z" fill="#b8b8b8"/><path d="M0.5 14Q0.5 11.5 3 11.5H9Q11.5 11.5 11.5 14Z" fill="#b8b8b8"/></svg>
<svg class="r" style="left:1282px;top:617px;" width="17" height="15" viewBox="0 0 17 15"><path d="M3.5 11Q0.5 11 0.5 8Q0.5 5.5 3 5.3Q3.5 1 7.5 1Q11.5 1 12 5Q14.5 5.3 14.5 8" fill="#b8b8b8"/><text x="7.6" y="9.5" font-family="Liberation Sans" font-size="8.5" font-weight="bold" fill="#45484a" text-anchor="middle">?</text><circle cx="13" cy="11.5" r="3" fill="none" stroke="#b8b8b8" stroke-width="1.6"/></svg></body></html>
